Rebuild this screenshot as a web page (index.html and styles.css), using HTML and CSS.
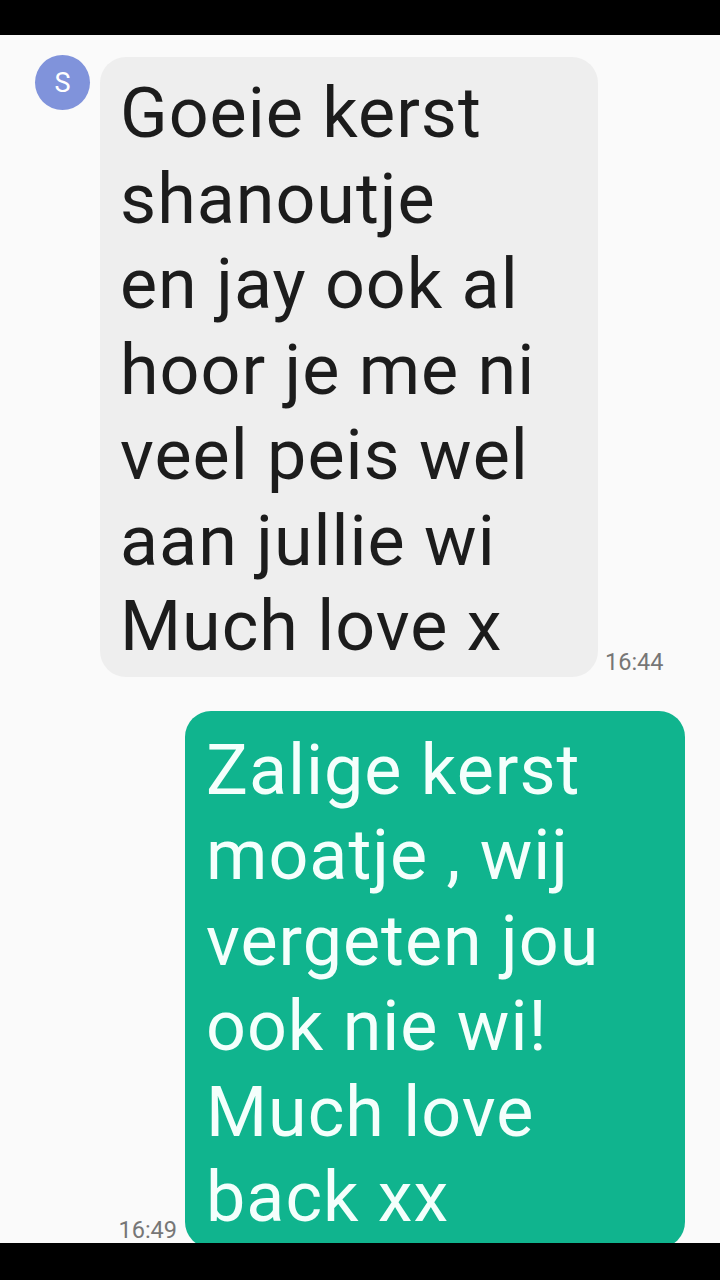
FILE: index.html
```html
<!DOCTYPE html>
<html lang="nl">
<head>
    <meta charset="UTF-8">
    <meta name="viewport" content="width=device-width, initial-scale=1.0">
    <title>Berichten</title>
    <link rel="stylesheet" href="styles.css">
</head>
<body>
    <div class="bar"></div>
    <div class="chat">
        <div class="row in">
            <div class="avatar">S</div>
            <div class="bubble gray">Goeie kerst<br>shanoutje<br>en jay ook al<br>hoor je me ni<br>veel peis wel<br>aan jullie wi<br>Much love x</div>
            <span class="time">16:44</span>
        </div>
        <div class="row out">
            <span class="time">16:49</span>
            <div class="bubble green">Zalige kerst<br>moatje , wij<br>vergeten jou<br>ook nie wi!<br>Much love<br>back xx</div>
        </div>
    </div>
    <div class="bar bottom"></div>
</body>
</html>
```

FILE: styles.css
```css
body {
    margin: 0;
    width: 720px;
    height: 1280px;
    overflow: hidden;
    display: flex;
    flex-direction: column;
    background-color: #fafafa;
    font-family: Roboto, "Noto Sans", sans-serif;
}
.bar {
    height: 35px;
    background-color: #000;
    flex-shrink: 0;
}
.bar.bottom {
    height: 37px;
}
.chat {
    flex: 1;
    overflow: hidden;
    padding-top: 20px;
}
.row {
    display: flex;
    align-items: flex-end;
}
.row.in {
    padding-left: 35px;
}
.row.out {
    justify-content: flex-end;
    padding-right: 35px;
    margin-top: 34px;
}
.avatar {
    width: 55px;
    height: 55px;
    border-radius: 50%;
    background-color: #8093db;
    color: #fff;
    font-size: 27px;
    display: flex;
    align-items: center;
    justify-content: center;
    align-self: flex-start;
    flex-shrink: 0;
}
.bubble {
    box-sizing: border-box;
    border-radius: 26px;
    font-size: 70px;
    line-height: 85.5px;
    letter-spacing: 1px;
    padding-left: 20px;
}
.bubble.gray {
    width: 498px;
    margin-left: 10px;
    margin-top: 2px;
    padding-top: 14px;
    padding-bottom: 7px;
    background-color: #eeeeee;
    color: #1c1c1c;
}
.bubble.green {
    width: 500px;
    padding-left: 21px;
    padding-top: 17px;
    padding-bottom: 7px;
    background-color: #10b48e;
    color: #f4fffc;
}
.time {
    font-size: 23.5px;
    color: #767676;
}
.row.in .time {
    margin-left: 7px;
    margin-bottom: 1px;
}
.row.out .time {
    margin-right: 8px;
    margin-bottom: 4px;
}
```
